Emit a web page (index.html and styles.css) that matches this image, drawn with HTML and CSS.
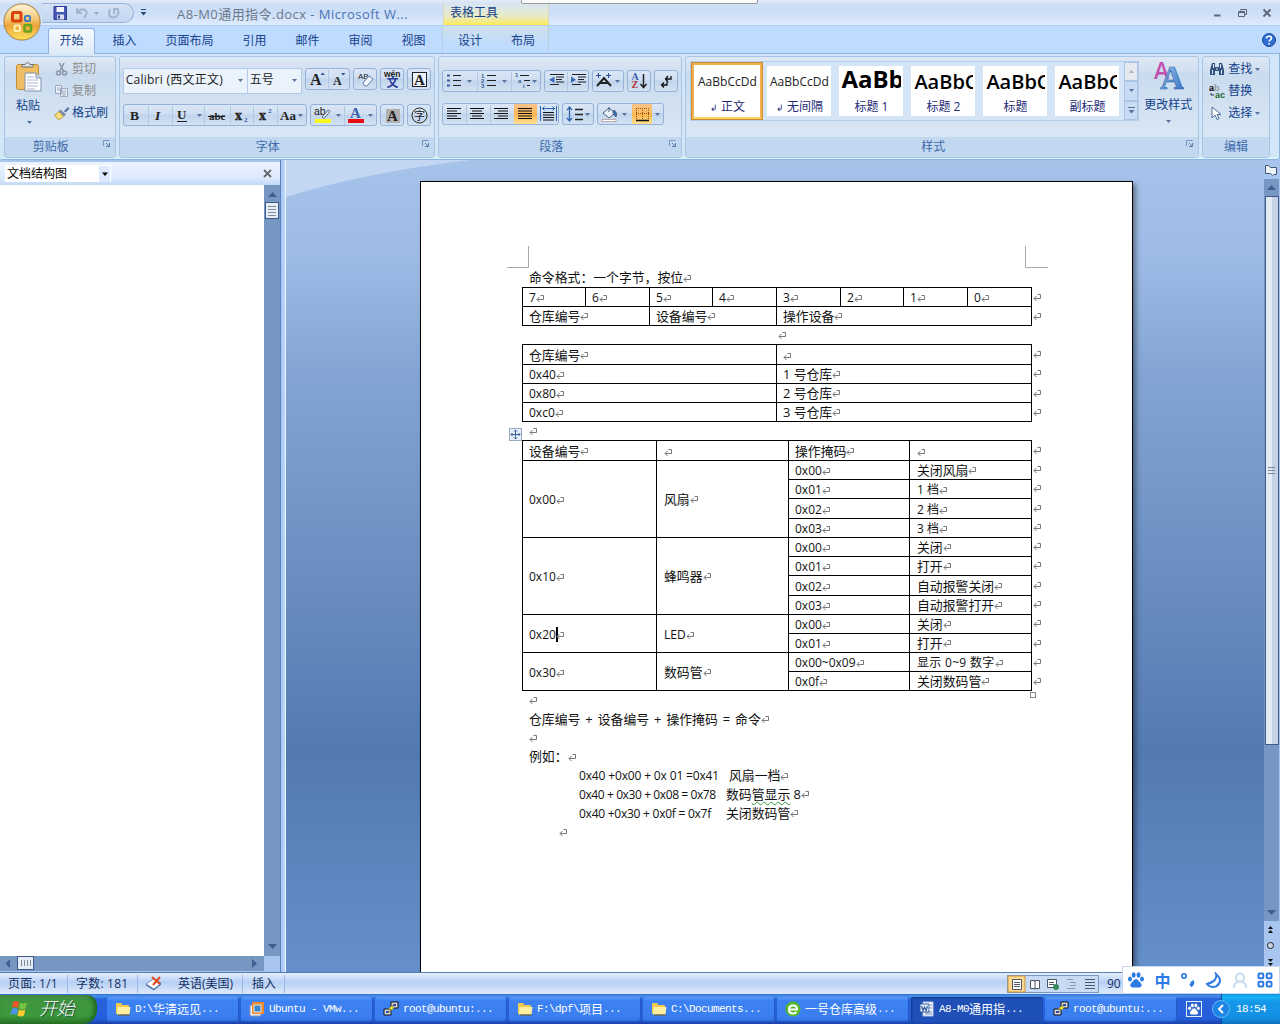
FILE: index.html
```html
<!DOCTYPE html>
<html lang="zh-CN">
<head>
<meta charset="utf-8">
<title>A8-M0通用指令.docx - Microsoft Word</title>
<link rel="stylesheet" href="styles.css">
</head>
<body>
<svg class="defs" width="0" height="0">
  <defs>
    <linearGradient id="gold" x1="0" y1="0" x2="0" y2="1"><stop offset="0" stop-color="#fff6dc"/><stop offset=".4" stop-color="#f5cb7a"/><stop offset=".6" stop-color="#eda33a"/><stop offset="1" stop-color="#ffe45c"/></linearGradient>
    <linearGradient id="sel" x1="0" y1="0" x2="0" y2="1"><stop offset="0" stop-color="#f9c48a"/><stop offset=".5" stop-color="#fdb650"/><stop offset="1" stop-color="#ffeb9f"/></linearGradient>
    <linearGradient id="blueA" x1="0" y1="0" x2="1" y2="1"><stop offset="0" stop-color="#a8cdf2"/><stop offset="1" stop-color="#2c6cc0"/></linearGradient>
    <symbol id="dd" viewBox="0 0 5 3"><path d="M0 0h5L2.5 3z" fill="#56749d"/></symbol>
    <symbol id="folder" viewBox="0 0 16 16"><path d="M1 3q0-1 1-1h4l1.500 2H13q1 0 1 1v8H2q-1 0-1-1z" fill="#f2cb4e"/><path d="M2.500 6H15.500l-1 7.500H2z" fill="#fff0a0"/><path d="M3 14h11.500" stroke="#7d5a10"/></symbol>
    <symbol id="putty" viewBox="0 0 16 16"><path d="M8 1h7v6H8zM1 8h7v6H1z" fill="#d8d8d8" stroke="#111"/><path d="M10 3h3v2h-3zM3 10h3v2H3z" fill="#2844b8"/><path d="M11 3L5 8h3l-3 4 7-6H9z" fill="#ffee22" stroke="#554" stroke-width=".4"/></symbol>
    <symbol id="paw" viewBox="0 0 18 18"><ellipse cx="3" cy="8" rx="2" ry="2.500"/><ellipse cx="6.700" cy="4" rx="2" ry="2.700"/><ellipse cx="11.500" cy="4" rx="2" ry="2.700"/><ellipse cx="15" cy="8" rx="2" ry="2.500"/><path d="M9 8c2 0 3 2.500 4.700 4 2 2 .6 4.600-1.700 4.500H6c-2.500 0-3.700-2.500-1.700-4.500C6 10.500 7 8 9 8z"/></symbol>
    <symbol id="launch" viewBox="0 0 9 9"><path d="M1.500 7V1.500h6" stroke="#7593bd" fill="none"/><path d="M4 4l3 3M7.500 4v3.500H4" stroke="#5c7dac" fill="none"/></symbol>
  </defs>
</svg>

<header class="titlebar">
  <div class="qat">
    <svg width="92" height="19" viewBox="42 4 92 19">
      <path d="M54 6.500h12.500v13H54z" fill="#4757b4" stroke="#2b3990"/><path d="M56.500 7h7.500v5h-7.500z" fill="#f3f5fc"/><path d="M57 14.500h7v5h-7z" fill="#d7dcf0"/><path d="M58 15.500h2v3h-2z" fill="#2b3990"/>
      <path d="M77 8v5h5M77 12.500q4-5 9-2 2 3-2 7" stroke="#a3b4d0" stroke-width="2" fill="none"/>
      <use href="#dd" x="94" y="12" width="5" height="3" opacity=".5"/>
      <path d="M110 9q-3 8 3 8.500 7-1 5-8M118.500 9h-4.500v5" stroke="#a3b4d0" stroke-width="2" fill="none"/>
    </svg>
  </div>
  <svg class="qat-more" width="7" height="8"><path d="M1 .5h5" stroke="#2b4a7c"/><path d="M.5 3h6L3.500 6.500z" fill="#2b4a7c"/></svg>
  <h1 class="caption"><span>A8-M0通用指令.docx</span> - Microsoft W...</h1>
  <div class="context-head">表格工具</div>
  <div class="window-controls">
    <svg width="62" height="14" viewBox="1211 6 62 14" fill="none" stroke="#5b6675"><path d="M1214 15.500h6.500" stroke-width="2"/><path d="M1240.500 10.500v-1h6v5h-2M1238.500 11.500h6v5h-6zM1238.500 12.500h6"/><path d="M1263.500 9.500l7 7M1270.500 9.500l-7 7" stroke-width="1.800"/></svg>
  </div>
  <div class="peek"></div>
</header>

<nav class="tabs">
  <a class="tab active">开始</a><a class="tab">插入</a><a class="tab">页面布局</a><a class="tab">引用</a><a class="tab">邮件</a><a class="tab">审阅</a><a class="tab">视图</a>
  <div class="context-tabs"><a class="tab">设计</a><a class="tab">布局</a></div>
  <svg class="help" width="14" height="14"><circle cx="7" cy="7" r="6.500" fill="#2f6fd4" stroke="#1d4796"/><path d="M4.500 5.500q0-2.200 2.500-2.200t2.500 2q0 1.200-1.400 1.800-1 .5-1 1.500M7 10v1.600" stroke="#fff" stroke-width="1.600" fill="none"/></svg>
</nav>
<svg class="orb" width="42" height="42"><circle cx="22" cy="22" r="19" fill="#9aa9bf" opacity=".5"/><circle cx="22" cy="22" r="18" fill="url(#gold)" stroke="#b98a3a"/><rect x="12.500" y="12.500" width="8.500" height="8.500" rx="1" fill="none" stroke="#d8430e" stroke-width="3"/><rect x="25" y="16" width="5" height="5" rx="1" fill="none" stroke="#3f7fc2" stroke-width="2"/><rect x="14.500" y="25.500" width="5.500" height="5.500" rx="1" fill="none" stroke="#fff0b0" stroke-width="2"/><rect x="24.500" y="25" width="6.500" height="6.500" rx="1" fill="none" stroke="#68a51c" stroke-width="2.500"/></svg>

<section class="ribbon">
  <div class="group clipboard">
    <div class="group-body">
      <div class="paste">
        <svg width="28" height="31"><rect x="1.500" y="3.500" width="22" height="25" rx="2" fill="#f0be62" stroke="#c08c35"/><path d="M7 6V3.500h3q2.500-4 5 0h3V6z" fill="#dfe3ea" stroke="#6c6c6c"/><path d="M10 12h11l5 5v13H10z" fill="#fff" stroke="#8190aa"/><path d="M12 16h7M12 19h11M12 22h11M12 25h11M12 28h8" stroke="#a9b8d0"/><path d="M21 12v5h5" fill="#cfdaea" stroke="#8190aa"/></svg>
        <span>粘贴</span><svg width="5" height="3"><use href="#dd"/></svg>
      </div>
      <div class="clip-list">
        <span class="off"><svg width="16" height="14"><path d="M5.500 1l4 8M10 1L6 9" stroke="#8a95a8" stroke-width="1.600"/><circle cx="4.500" cy="11" r="2" fill="none" stroke="#8a95a8" stroke-width="1.500"/><circle cx="10.500" cy="11" r="2" fill="none" stroke="#8a95a8" stroke-width="1.500"/></svg>剪切</span>
        <span class="off"><svg width="16" height="14"><path d="M1.500 1.500h6v8h-6zM6.500 4.500h7v8h-7z" fill="#edf1f7" stroke="#9aa8bf"/><path d="M8 7h4M8 9h4M8 11h4M3 4h3M3 6h3" stroke="#9aa8bf"/></svg>复制</span>
        <span><svg width="16" height="14"><path d="M10 5l4-4 1.500 1.500-4 4z" fill="#52709c"/><path d="M6.500 3.500l5.500 5-2 2-5.500-5.500z" fill="#7c8ca8"/><path d="M4.500 5.500l5 5Q7 13 4 13.500L.5 9q3-1 4-3.500z" fill="#fbdf7a" stroke="#b08a2c" stroke-width=".8"/></svg>格式刷</span>
      </div>
    </div>
    <div class="group-name">剪贴板<svg width="9" height="9"><use href="#launch"/></svg></div>
  </div>

  <div class="group font">
    <div class="group-body">
      <div class="row first">
        <div class="combo face">Calibri (西文正文)<svg width="5" height="3"><use href="#dd"/></svg></div>
        <div class="combo size">五号<svg width="5" height="3"><use href="#dd"/></svg></div>
        <svg class="btns gap" width="44" height="22"><g class="glyph"><text x="4" y="16" font-size="16">A</text><text x="27" y="16" font-size="12">A</text></g><path d="M14.500 6h4.500L16.700 3.500zM35 4h4.500L37.200 6.500z" fill="#33569a"/><path class="sep" d="M22.500 1v20"/></svg>
        <svg class="btns" width="24" height="22"><text x="4" y="10" font-size="8" font-family="Liberation Sans">AB</text><path d="M9 14l6-7 4 3-6 7q-3 1-4-3z" fill="#f4f7ff" stroke="#5e7bad"/></svg>
        <svg class="btns" width="24" height="22"><text x="3" y="8" font-size="8.500" font-weight="bold" font-family="Liberation Sans">wén</text><text x="5.500" y="18" font-size="12" font-weight="bold" fill="#2c3c9c" class="cjk">文</text></svg>
        <svg class="btns" width="24" height="22"><rect x="4.500" y="3.500" width="14" height="14" fill="#eaf1fa" stroke="#222"/><text class="glyph" x="6" y="16" font-size="15">A</text></svg>
      </div>
      <div class="row second">
        <svg class="btns" width="184" height="22"><g class="glyph"><text x="6" y="15" font-size="13.500">B</text><text x="31" y="15" font-size="13.500" font-style="italic">I</text><text x="53" y="14" font-size="13">U</text><path d="M53 16.500h10" stroke="#222"/><text x="85" y="15" font-size="11">abc</text><path d="M84 11.500h17" stroke="#222"/><text x="111" y="15" font-size="14" stroke="#222" stroke-width=".4">x</text><text x="120" y="17" font-size="7" fill="#33569a">2</text><text x="135" y="15" font-size="14" stroke="#222" stroke-width=".4">x</text><text x="144" y="8" font-size="7" fill="#33569a">2</text><text x="156" y="15" font-size="13">Aa</text></g><use href="#dd" x="73" y="9" width="5" height="3"/><use href="#dd" x="174" y="9" width="5" height="3"/><path class="sep" d="M24.500 1v20M48.500 1v20M80.500 1v20M106.500 1v20M129.500 1v20M153.500 1v20"/></svg>
        <svg class="btns" width="67" height="22"><text x="3" y="10" font-size="10.500" font-family="Liberation Sans">ab</text><path d="M11 12l6-7 2 1.500-6 7z" fill="#dae6f6" stroke="#567"/><path d="M4 14h16v4H4z" fill="#f8f81c"/><use href="#dd" x="25" y="9" width="5" height="3"/><text class="glyph blue" x="39" y="13" font-size="15">A</text><path d="M37 14h16v4H37z" fill="#e80c14"/><use href="#dd" x="57" y="9" width="5" height="3"/><path class="sep" d="M33.500 1v20"/></svg>
        <svg class="btns" width="24" height="22"><path d="M5 4h14v14H5z" fill="#b0b0b0"/><text class="glyph" x="6" y="16" font-size="15">A</text></svg>
        <svg class="btns" width="24" height="22"><circle cx="11.500" cy="10.500" r="7.500" fill="none" stroke="#222"/><text class="cjk" x="6" y="14.500" font-size="11">字</text></svg>
      </div>
    </div>
    <div class="group-name">字体<svg width="9" height="9"><use href="#launch"/></svg></div>
  </div>

  <div class="group para">
    <div class="group-body">
      <div class="row first">
        <svg class="btns" width="99" height="22"><g stroke="#222" stroke-width="1"><path d="M10 4.500h8M10 9.500h8M10 14.500h8M44 4.500h9M44 9.500h9M44 14.500h9M77 4.500h9M81 9.500h6M84 14.500h3"/></g><path d="M4 3.500h3v2H4zM4 8.500h3v2H4zM4 13.500h3v2H4z" fill="#3d5f9c"/><g font-size="6" font-family="Liberation Sans" font-weight="bold" fill="#3d5f9c"><text x="38" y="7">1</text><text x="38" y="12">2</text><text x="38" y="17">3</text><text x="72" y="6">1</text><text x="75" y="12">a</text><text x="80" y="17">i</text></g><use href="#dd" x="24" y="9" width="5" height="3"/><use href="#dd" x="59" y="9" width="5" height="3"/><use href="#dd" x="89" y="9" width="5" height="3"/><path class="sep" d="M34.500 1v20M68.500 1v20"/></svg>
        <svg class="btns" width="45" height="22"><path d="M5 3.500h14M11 6h8M11 8.500h6M11 11h8M5 13.500h9M27 3.500h14M33 6h8M33 8.500h6M33 11h8M27 13.500h9" stroke="#222" stroke-width="1.200"/><path d="M9.500 5.500v6.500L4 8.700zM26 5.500v6.500l5-3.300z" fill="#3f6db8"/><path class="sep" d="M22.500 1v20"/></svg>
        <svg class="btns" width="32" height="22"><path d="M4 15l7-8 7 8M7 12h8" fill="none" stroke="#222" stroke-width="2"/><path d="M3 4.500h5M5.500 2v5M13 4.500h5M15.500 2v5" stroke="#2d4898"/><use href="#dd" x="22" y="9" width="5" height="3"/></svg>
        <svg class="btns" width="24" height="22"><g font-family="Liberation Serif" font-weight="bold" font-size="10"><text x="3.500" y="9" fill="#3b5fa8">A</text><text x="3.500" y="17" fill="#ad3232">Z</text></g><path d="M15.500 3v13M12.500 13l3 3.500 3-3.500" fill="none" stroke="#222" stroke-width="1.500"/></svg>
        <svg class="btns" width="24" height="22"><path d="M16 5v3h-5M13 5l-2.500 3L13 11M12 11v3H7M9 11.500L6.500 14 9 16.500" fill="none" stroke="#111" stroke-width="1.300"/></svg>
      </div>
      <div class="row second">
        <svg class="btns" width="117" height="22"><path d="M71 0h23v22H71z" fill="url(#sel)"/><g stroke="#111" stroke-width="1.200"><path d="M4 4.500h14M4 7h10M4 9.500h14M4 12h10M4 14.500h14M27 4.500h14M29 7h10M27 9.500h14M29 12h10M27 14.500h14M51 4.500h14M55 7h10M51 9.500h14M55 12h10M51 14.500h14M75 4.500h14M75 7h14M75 9.500h14M75 12h14M75 14.500h14M100 8.500h11M100 11h11M100 13.500h11M100 16h11"/></g><path d="M97.500 2v15M113.500 2v15M99 4.500h13M101.500 2.500l-2 2 2 2M109.500 2.500l2 2-2 2" stroke="#2f63ad" fill="none"/><path class="sep" d="M23.500 1v20M47.500 1v20"/></svg>
        <svg class="btns" width="32" height="22"><path d="M6.500 3v14M4 6l2.500-3L9 6M4 14l2.500 3L9 14" stroke="#2f63ad" stroke-width="1.300" fill="none"/><path d="M12 5.500h8M12 10.500h8M12 15.500h8" stroke="#222" stroke-width="1.300"/><use href="#dd" x="22" y="9" width="5" height="3"/></svg>
        <svg class="btns" width="67" height="22"><path d="M34 0h20v22H34z" fill="url(#sel)"/><path d="M5 9l6-5 6 5-6 5z" fill="#eef3fa" stroke="#445d85"/><path d="M11 8V3M16 6q4 3 2 7l-3-4z" fill="#3b6fb4" stroke="#445d85"/><path d="M4 15.500h14v2H4z" fill="#fff" stroke="#a88" stroke-width=".7"/><path d="M38 4.500h13M38 9.500h13M38.500 4v11M44.500 4v11M50.500 4v11" stroke="#8b5713" stroke-dasharray="1 1"/><path d="M38 16.500h13" stroke="#111" stroke-width="1.500"/><use href="#dd" x="24" y="9" width="5" height="3"/><use href="#dd" x="57" y="9" width="5" height="3"/></svg>
      </div>
    </div>
    <div class="group-name">段落<svg width="9" height="9"><use href="#launch"/></svg></div>
  </div>

  <div class="group styles">
    <div class="group-body">
      <div class="gallery">
        <div class="tile picked"><b>AaBbCcDd</b><span><i>↲</i> 正文</span></div>
        <div class="tile"><b>AaBbCcDd</b><span><i>↲</i> 无间隔</span></div>
        <div class="tile big"><b>AaBb</b><span>标题 1</span></div>
        <div class="tile mid"><b>AaBbC</b><span>标题 2</span></div>
        <div class="tile mid"><b>AaBbC</b><span>标题</span></div>
        <div class="tile mid"><b>AaBbC</b><span>副标题</span></div>
        <div class="gallery-scroll"><i class="dim"><svg width="5" height="3"><path d="M0 3h5L2.500 0z" fill="#a9b2bf"/></svg></i><i><svg width="5" height="3"><use href="#dd"/></svg></i><i><svg width="7" height="7"><path d="M0 .5h7" stroke="#56749d"/><path d="M.5 3h6l-3 3.500z" fill="#56749d"/></svg></i></div>
      </div>
      <div class="change">
        <svg width="30" height="28"><g font-family="Open Sans" font-weight="600"><text x="0" y="17" font-size="23" textLength="15" lengthAdjust="spacingAndGlyphs" fill="#c04fae">A</text></g><text x="6" y="27" font-family="Liberation Serif" font-weight="bold" font-size="34" textLength="24" lengthAdjust="spacingAndGlyphs" fill="url(#blueA)" stroke="#2d64ac" stroke-width=".6">A</text></svg>
        <span>更改样式</span><svg width="5" height="3"><use href="#dd"/></svg>
      </div>
    </div>
    <div class="group-name">样式<svg width="9" height="9"><use href="#launch"/></svg></div>
  </div>

  <div class="group edit">
    <div class="group-body">
      <span><svg width="16" height="14"><path d="M3 1h3v4h4V1h3l2 7v5h-5V9H6v4H1V8z" fill="#33527f"/><path d="M3.500 8v4M12.500 8v4M4.500 2v4M11.500 2v4M7 7h2" stroke="#dce9f8"/></svg>查找<svg width="5" height="3"><use href="#dd"/></svg></span>
      <span><svg width="16" height="15"><g font-family="Liberation Sans" font-weight="bold" font-size="9"><text x="0" y="7">a<tspan fill="#999">b</tspan></text><text x="6" y="14" fill="#276a2b">ac</text></g><path d="M2 9v2h3" stroke="#234" fill="none"/></svg>替换</span>
      <span><svg width="16" height="14"><path d="M3 1v11l3-3 2 4.500 2-1-2-4h4z" fill="#fff" stroke="#4d6c98"/></svg>选择<svg width="5" height="3"><use href="#dd"/></svg></span>
    </div>
    <div class="group-name">编辑</div>
  </div>
</section>

<main class="workspace">
  <aside class="map">
    <div class="map-head"><div class="map-pick">文档结构图<svg width="11" height="16"><path d="M3 6.500h6L6 10z" fill="#000"/></svg></div><svg width="9" height="9"><path d="M1 1l7 7M8 1L1 8" stroke="#66696e" stroke-width="1.800"/></svg></div>
    <div class="map-body"><div class="map-blank"></div>
      <svg class="vbar" width="16" height="771"><path d="M4 12h9L8.500 7z" fill="#3f5f93"/><rect x="1.500" y="17.500" width="13" height="16" fill="#e5edf7" stroke="#41598a"/><path d="M4 21.500h8M4 24.500h8M4 27.500h8M4 30.500h8" stroke="#7c8797"/><path d="M4 759h9l-4.500 5z" fill="#3f5f93"/></svg>
    </div>
    <svg class="hbar" width="264" height="15"><path d="M10 3v9L5.500 7.500z" fill="#3f5f93"/><rect x="17.500" y=".5" width="16" height="13" fill="#e5edf7" stroke="#41598a"/><path d="M21.500 4v6M24.500 4v6M27.500 4v6M30.500 4v6" stroke="#7c8797"/><path d="M252 3v9l5-4.500z" fill="#3f5f93"/></svg>
  </aside>
  <div class="splitter"></div>
  <div class="desk">
    <svg class="swoosh" width="200" height="40"><path d="M0 0h185Q80 12 0 37z" fill="#c3d7f2"/></svg>
    <article class="page">
      <svg class="crop" width="542" height="22"><path d="M21.500 0v21.500H0M518.500 0v21.500H541" fill="none" stroke="#aaa"/></svg>
      <p>命令格式：一个字节，按位<i class="pm"></i></p>
      <div class="table-wrap"><div class="grid t1">
        <div>7<i class="pm"></i></div><div>6<i class="pm"></i></div><div>5<i class="pm"></i></div><div>4<i class="pm"></i></div><div>3<i class="pm"></i></div><div>2<i class="pm"></i></div><div>1<i class="pm"></i></div><div>0<i class="pm"></i></div>
        <div class="h c2">仓库编号<i class="pm"></i></div><div class="h c2">设备编号<i class="pm"></i></div><div class="h c4">操作设备<i class="pm"></i></div>
      </div><div class="ends"><i class="pm"></i><i class="pm"></i></div></div>
      <p class="center"><i class="pm"></i></p>
      <div class="table-wrap"><div class="grid t2">
        <div class="h">仓库编号<i class="pm"></i></div><div><i class="pm"></i></div>
        <div>0x40<i class="pm"></i></div><div class="h">1 号仓库<i class="pm"></i></div>
        <div>0x80<i class="pm"></i></div><div class="h">2 号仓库<i class="pm"></i></div>
        <div>0xc0<i class="pm"></i></div><div class="h">3 号仓库<i class="pm"></i></div>
      </div><div class="ends"><i class="pm"></i><i class="pm"></i><i class="pm"></i><i class="pm"></i></div></div>
      <p class="short"><i class="pm"></i></p>
      <div class="table-wrap"><svg class="mover" width="13" height="13"><rect x=".5" y=".5" width="12" height="12" fill="#e6eefa" stroke="#9aa9c2"/><path d="M6.500 2v9M2 6.500h9M5 3.500L6.500 2 8 3.500M5 9.500L6.500 11 8 9.500M3.500 5L2 6.500 3.500 8M9.500 5L11 6.500 9.500 8" stroke="#3c5c9c" fill="none"/></svg>
      <div class="grid t3">
        <div class="h">设备编号<i class="pm"></i></div><div class="in"><i class="pm"></i></div><div class="h">操作掩码<i class="pm"></i></div><div class="in"><i class="pm"></i></div>
        <div class="r4">0x00<i class="pm"></i></div><div class="h in r4">风扇<i class="pm"></i></div><div>0x00<i class="pm"></i></div><div class="h in">关闭风扇<i class="pm"></i></div>
        <div>0x01<i class="pm"></i></div><div class="in">1 档<i class="pm"></i></div>
        <div>0x02<i class="pm"></i></div><div class="in">2 档<i class="pm"></i></div>
        <div>0x03<i class="pm"></i></div><div class="in">3 档<i class="pm"></i></div>
        <div class="r4">0x10<i class="pm"></i></div><div class="h in r4">蜂鸣器<i class="pm"></i></div><div>0x00<i class="pm"></i></div><div class="h in">关闭<i class="pm"></i></div>
        <div>0x01<i class="pm"></i></div><div class="h in">打开<i class="pm"></i></div>
        <div>0x02<i class="pm"></i></div><div class="h in">自动报警关闭<i class="pm"></i></div>
        <div>0x03<i class="pm"></i></div><div class="h in">自动报警打开<i class="pm"></i></div>
        <div class="r2">0x20<i class="caret"></i><i class="pm"></i></div><div class="in r2">LED<i class="pm"></i></div><div>0x00<i class="pm"></i></div><div class="h in">关闭<i class="pm"></i></div>
        <div>0x01<i class="pm"></i></div><div class="h in">打开<i class="pm"></i></div>
        <div class="r2">0x30<i class="pm"></i></div><div class="h in r2">数码管<i class="pm"></i></div><div>0x00~0x09<i class="pm"></i></div><div class="in wide">显示 0~9 数字<i class="pm"></i></div>
        <div>0x0f<i class="pm"></i></div><div class="h in">关闭数码管<i class="pm"></i></div>
      </div><div class="ends"><i class="pm"></i><i class="pm"></i><i class="pm"></i><i class="pm"></i><i class="pm"></i><i class="pm"></i><i class="pm"></i><i class="pm"></i><i class="pm"></i><i class="pm"></i><i class="pm"></i><i class="pm"></i><i class="pm"></i></div><i class="resize"></i></div>
      <p><i class="pm"></i></p>
      <p class="formula">仓库编号 + 设备编号 + 操作掩码 = 命令<i class="pm"></i></p>
      <p><i class="pm"></i></p>
      <p>例如：<i class="pm"></i></p>
      <p class="example"><span class="sum1">0x40 +0x00 + 0x 01 =0x41</span><span>风扇一档</span><i class="pm"></i></p>
      <p class="example"><span class="sum2">0x40 + 0x30 + 0x08 = 0x78</span><span>数码<u>管显示</u> 8</span><i class="pm"></i></p>
      <p class="example"><span class="sum3">0x40 +0x30 + 0x0f = 0x7f</span><span>关闭数码管</span><i class="pm"></i></p>
      <p class="last"><i class="pm"></i></p>
    </article>
  </div>
  <svg class="docbar" width="16" height="812" viewBox="1264 160 16 812"><rect x="1264" y="160" width="16" height="812" fill="#a7c5ee"/><path d="M1265.500 165.500h3l2 2h6v7h-3l-1 1-2-2h-5z" fill="#eef4fc" stroke="#46566f"/><rect x="1264" y="179" width="15" height="742" fill="#7797c3"/><path d="M1267 190h9l-4.500-5z" fill="#3f5f93"/><rect x="1265.500" y="196.500" width="13" height="548" fill="#c6d3e6" stroke="#41598a"/><path d="M1266 197h6v547h-6z" fill="#e3ebf5"/><path d="M1268 467.500h7M1268 470.500h7M1268 473.500h7" stroke="#7c8797"/><path d="M1267 910h9l-4.500 5z" fill="#3f5f93"/><path d="M1268 929h5l-2.500-3zM1268 933h5l-2.500-3zM1268 959h5l-2.500 3zM1268 963h5l-2.500 3z" fill="#111"/><circle cx="1270.500" cy="945.500" r="3" fill="#ccd6e3" stroke="#222"/></svg>
</main>

<footer class="status">
  <span class="s1">页面: 1/1</span><span class="s2">字数: 181</span><span class="s3"><svg width="18" height="15"><path d="M1 8l7-5 8 4-7 6z" fill="#fff" stroke="#6a87b8"/><path d="M1 9l8 5 7-6" fill="none" stroke="#44639b"/><path d="M7 1l8 7M15 1L8 9" stroke="#e4481e" stroke-width="2"/></svg>英语(美国)</span><span class="s4">插入</span>
  <svg class="views" width="92" height="18"><rect x=".5" y=".5" width="91" height="17" fill="#c8dbf5" stroke="#7996c4"/><path d="M1 1h17v16H1z" fill="#ffd88c" stroke="#c49446"/><g fill="#fff" stroke="#4f5662"><path d="M5.500 4.500h9v10h-9zM23.500 5.500h4l.500 1 .5-1h4v8h-4l-.5 1-.5-1h-4zM28 6v8M40.500 4.500h9v8h-9z"/><path d="M7 7.500h6M7 9.500h6M7 11.500h6M42 7.500h5M42 9.500h5M78 4.500h10M78 7.500h10M78 10.500h10M78 13.500h10"/><path d="M60 4.500h6M63 7.500h6M63 10.500h6M60 13.500h8" stroke="#8d97a8"/></g><circle cx="49" cy="12" r="3" fill="#398c60"/></svg>
  <span class="zoomed">90</span>
</footer>

<div class="ime">
  <svg width="18" height="18" fill="#2c7be5"><use href="#paw"/></svg>
  <b>中</b>
  <svg width="16" height="18" fill="none" stroke="#2c7be5" stroke-width="2"><circle cx="4" cy="5" r="2.200" stroke-width="1.700"/><path d="M12 10q1.500 2.500-1.500 5" stroke-width="3.500"/></svg>
  <svg width="17" height="17" fill="none" stroke="#2c7be5" stroke-width="2"><path d="M11 2q2 7-9 10 3 4 9 2.500Q19 9 11 2z"/></svg>
  <svg width="16" height="17" fill="none" stroke="#c9daf0" stroke-width="2"><circle cx="8" cy="5.500" r="4"/><path d="M2 16q0-6.500 6-6.500t6 6.500"/></svg>
  <svg width="16" height="16" fill="none" stroke="#2c7be5" stroke-width="2"><rect x="1.500" y="1.500" width="4.800" height="4.800" rx="1"/><rect x="9.700" y="1.500" width="4.800" height="4.800" rx="1"/><rect x="1.500" y="9.700" width="4.800" height="4.800" rx="1"/><rect x="9.700" y="9.700" width="4.800" height="4.800" rx="1"/></svg>
</div>

<div class="taskbar">
  <div class="start"><svg width="20" height="18"><path d="M3 2q3-2 6 0L8 8Q5 6 2 8z" fill="#f0592b"/><path d="M10 2.500q3 2 7 0l-1.500 6q-3 2-6.500 0z" fill="#7cc242"/><path d="M1.800 9q3-2 6 0l-1 6q-3-2-6.300 0z" fill="#4a94ea"/><path d="M8.800 9.500q3 2 6.500 0l-1.300 6q-3 2-6.500 0z" fill="#fcc92f"/></svg><em>开始</em></div>
  <div class="tasks">
    <div><svg width="16" height="16"><use href="#folder"/></svg>D:\<b>华清远见</b>...</div>
    <div><svg width="16" height="16"><rect x="1" y="4" width="11" height="11" rx="1" fill="#e9ecf2" stroke="#8895a8"/><rect x="3" y="1" width="12" height="12" rx="1" fill="#f18a24"/><rect x="5" y="4" width="7" height="7" fill="#3f87cb" stroke="#dce8f4"/></svg>Ubuntu - VMw...</div>
    <div><svg width="16" height="16"><use href="#putty"/></svg>root@ubuntu:...</div>
    <div><svg width="16" height="16"><use href="#folder"/></svg>F:\dpf\<b>项目</b>...</div>
    <div><svg width="16" height="16"><use href="#folder"/></svg>C:\Documents...</div>
    <div><svg width="16" height="16"><circle cx="8" cy="8" r="7.500" fill="#54b82c"/><path d="M4 8.500h8q0-4-4-4t-4 4 4 4q2.500 0 3.500-1.500" stroke="#fff" stroke-width="2" fill="none"/></svg><b>一号仓库高级</b>...</div>
    <div class="current"><svg width="16" height="16"><path d="M4 1h10v14H4z" fill="#fff" stroke="#b4c4e4"/><path d="M6 11h7M6 13h7M11 4h2M11 7h2" stroke="#6286c2"/><path d="M1 3h9v8H1z" fill="#e8effc" stroke="#315a9e"/><path d="M2.500 5l1.500 4.500L5.500 6 7 9.500 8.500 5" stroke="#315a9e" stroke-width="1.200" fill="none"/></svg>A8-M0<b>通用指</b>...</div>
    <div><svg width="16" height="16"><use href="#putty"/></svg>root@ubuntu:...</div>
  </div>
  <svg class="lang" width="16" height="16"><rect x=".5" y=".5" width="15" height="15" fill="#2a64cc" stroke="#e4ecfa"/><use href="#paw" x="1.500" y="1.500" width="13" height="13" fill="#fff"/></svg>
  <div class="tray"><svg width="18" height="18"><circle cx="9" cy="9" r="8.500" fill="#1c84e4" stroke="#66b8f6"/><path d="M11 5L7 9l4 4" stroke="#fff" stroke-width="2" fill="none"/></svg><time>18:54</time></div>
</div>
</body>
</html>
```
FILE: styles.css
```css
* { box-sizing: border-box; }
body {
  margin: 0; width: 1280px; height: 1024px; overflow: hidden; position: relative;
  display: flex; flex-direction: column;
  font: 12px/16px "Open Sans", "Noto Sans CJK SC", sans-serif; color: #15428b; background: #bfdbff;
}
svg { display: block; flex: none; }
i { font-style: normal; }
.defs { position: absolute; }
.cjk { font-family: "Noto Sans CJK SC", sans-serif; }

.titlebar { height: 26px; flex: none; display: flex; position: relative; padding-left: 42px; background: linear-gradient(#e3ebf8 0, #cfe0f6 4px, #cbdef8 12px, #dceafd 24px); border-bottom: 1px solid #b0cdf5; }
.qat { width: 92px; height: 20px; margin-top: 3px; border: 1px solid #9ab4dc; border-left: 0; border-radius: 0 10px 10px 0; background: linear-gradient(#d4e2f5, #c3d6f0); }
.qat-more { margin: 9px 0 0 6px; }
.caption { margin: 6px 0 0 30px; width: 266px; font: 13px/16px "Open Sans", "Noto Sans CJK SC", sans-serif; color: #4a72b4; white-space: nowrap; letter-spacing: .45px; }
.caption span { color: #6c7888; }
.context-head { width: 106px; margin-top: 3px; padding: 2px 6px; border: solid #d4d9b8; border-width: 0 1px; background: linear-gradient(#d7e5f5, #e8ebc5 60%, #f7ea76 90%, #ffe83c); }
.window-controls { margin: 6px 7px 0 auto; }
.peek { position: absolute; left: 521px; top: -3px; width: 237px; height: 7px; background: #fafafa; border: 1px solid #999; border-radius: 2px; }

.tabs { height: 28px; flex: none; display: flex; align-items: flex-end; padding-left: 48px; background: #bfdbff; border-bottom: 1px solid #8db2e3; }
.tab { height: 26px; padding: 6px 14.500px 0; white-space: nowrap; }
.tab.active { padding: 4px 0 0 10.500px; width: 47px; margin: 0 3px -1px 0; height: 26px; background: linear-gradient(#f4f9ff, #dfeaf8); border: 1px solid #8db2e3; border-bottom: 0; border-radius: 3px 3px 0 0; }
.context-tabs { display: flex; margin-left: 2px; height: 27px; align-items: flex-end; border: solid #b9cfdc; border-width: 0 1px; background: linear-gradient(#cfe0e8, #bfdbff 70%); width: 107px; }
.context-tabs .tab { padding: 6px 14px 0 15px; }
.help { margin: 0 4px 6px auto; }
.orb { position: absolute; left: 0; top: 0; }

.ribbon { height: 106px; flex: none; display: flex; gap: 3px; padding: 2px 9px 3px 4px; background: #d3e6f8; border: solid #8db2e3; border-width: 0 1px 1px 0; border-radius: 0 0 3px 3px; box-shadow: inset 0 -2px #d5f4fa; }
.group { display: flex; flex-direction: column; border: 1px solid #a9c5e3; border-radius: 3px; background: linear-gradient(#dee8f5 0, #d1dff0 14px, #c9dbee 16px, #d9e7f5 80px); height: 102px; }
.group-body { flex: 1; display: flex; min-height: 0; }
.group-name { height: 20px; flex: none; text-align: center; line-height: 20px; color: #3e6aaa; background: #c1d8f0; position: relative; padding-right: 18px; }
.group-name svg { position: absolute; right: 4px; top: 2px; }
.edit .group-name { padding-right: 0; }
.clipboard { width: 112px; }
.paste { width: 48px; display: flex; flex-direction: column; align-items: center; padding-top: 4px; }
.paste span { margin: 6px 2px 7px 0; }
.clip-list { padding-top: 1px; }
.clip-list span { display: flex; align-items: center; gap: 2px; height: 22px; white-space: nowrap; padding-left: 1px; }
.clip-list span.off { color: #8d8d8d; }
.font { width: 317px; }
.para { width: 245px; }
.styles { width: 515px; }
.edit { width: 68px; }
.font .group-body, .para .group-body { flex-direction: column; padding: 11px 3px 0; }
.para .group-body { padding-top: 13px; }
.row { display: flex; gap: 3px; flex: none; }
.font .first { height: 36px; }
.para .first { height: 33px; }
.combo { height: 26px; border: 1px solid #b3cbe8; background: #eaf2fb; color: #222; display: flex; align-items: center; justify-content: space-between; padding: 0 4px 2px 2px; white-space: nowrap; }
.face { width: 125px; margin-right: -4px; letter-spacing: .25px; }
.size { width: 55px; }
.btns { border: 1px solid #96b2d8; border-radius: 3px; background: linear-gradient(#d9e6f6 0, #cfdff2 45%, #c0d4ec 50%, #d3e2f3 100%); fill: #222; }
.font .first .gap { width: 45px; }
.btns .sep { stroke: #b3c8e3; fill: none; }
.glyph { font-family: "Liberation Serif", serif; font-weight: bold; }
.blue { fill: #3a62a8; }

.gallery { width: 449px; height: 60px; margin: 4px 0 0 4px; border: 1px solid #b4cdea; background: #d4e5f8; display: flex; }
.tile { width: 64px; height: 50px; margin: 4px 4px 0; padding: 0 2px; background: #fff; text-align: center; flex: none; overflow: hidden; color: #1e2a78; white-space: nowrap; }
.tile b { display: block; height: 32px; line-height: 31px; color: #222; font-weight: 400; font-size: 12px; overflow: hidden; }
.tile span { display: block; line-height: 17px; }
.tile i { font-size: 9px; }
.tile.picked { width: 72px; height: 58px; margin: 0; padding: 1px 2px 0; border: 3px solid #f1b04c; border-bottom-color: #ffd25c; outline: 1px solid #c98b33; outline-offset: -1px; }
.tile.big b { font-weight: 700; font-size: 24px; line-height: 26px; text-align: left; color: #000; }
.tile.mid b { font: 600 20px/31px "Open Sans", sans-serif; text-align: left; color: #000; padding-left: 1px; }
.gallery-scroll { margin-left: auto; width: 14px; display: grid; grid-template-rows: repeat(3, 1fr); }
.gallery-scroll i { display: grid; place-items: center; background: #c9dcf4; border: 1px solid #aac4e6; }
.gallery-scroll .dim { background: #e6e9ee; }
.change { flex: 1; display: flex; flex-direction: column; align-items: center; padding-top: 5px; }
.change span { margin: 7px 1px 7px 0; }
.edit .group-body { flex-direction: column; padding: 1px 0 0 6px; }
.edit .group-body span { height: 22px; display: flex; align-items: center; gap: 3px; }

.workspace { flex: 1; min-height: 0; display: flex; background: #a5c3eb; }
.map { width: 280px; display: flex; flex-direction: column; padding-top: 2px; background: #a7c5ee; }
.map-head { height: 23px; flex: none; display: flex; justify-content: space-between; align-items: center; padding: 0 8px 0 5px; background: linear-gradient(#ecf4ff, #dce9fb 70%, #c0d8f8); }
.map-pick { display: flex; align-items: center; justify-content: space-between; width: 106px; height: 17px; padding: 0 1px 0 2px; background: #fff; color: #000; }
.map-pick svg { background: #dce8fb; }
.map-body { display: flex; }
.map-blank { flex: 1; background: #fff; }
.vbar, .hbar { background: #7797c3; }
.splitter { width: 6px; border: solid #5b82bd; border-width: 0 0 0 1px; background: linear-gradient(90deg, #a8c8f4, #b7d4fb 70%, #eef6ff 72%); }
.desk { flex: 1; position: relative; padding: 21px 131px 0 134px; background: linear-gradient(#a6c3ea 0, #9dbbe5 12%, #84a5d3 26%, #5f84b9 62%, #527ab0 73%, #6690cc 100%); overflow: hidden; }
.swoosh { position: absolute; left: 0; top: 0; }
.page { position: relative; width: 713px; height: 800px; padding: 86px 0 0 101px; background: #fff; border: 1px solid #000; box-shadow: 3px 3px 5px #0006; color: #111; font: 12px/19px "Open Sans", "Noto Sans CJK SC", sans-serif; }
.crop { position: absolute; left: 86px; top: 64px; }
.page p { margin: 0; height: 18.800px; padding: 0 0 0 7px; display: flex; align-items: center; white-space: pre; font-size: 12.850px; }
.page p:first-of-type { height: 19px; }
.page p.center { justify-content: center; height: 18px; width: 512px; }
.page p.short { height: 18px; }
.page p.formula { font-size: 12.850px; word-spacing: 1.650px; }
.pm { display: inline-block; flex: none; width: 8px; height: 8px; background: url("data:image/svg+xml,%3Csvg xmlns='http://www.w3.org/2000/svg' width='8' height='8' fill='none' stroke='%23777'%3E%3Cpath d='M4.500 1.500h3v4H1M3.500 3L1 5.500 3.500 8'/%3E%3C/svg%3E"); }
.table-wrap { display: flex; position: relative; }
.grid { display: grid; width: 510px; border: solid #000; border-width: 1px 0 0 1px; flex: none; }
.grid > div { border: solid #000; border-width: 0 1px 1px 0; padding: 2px 0 0 6px; display: flex; align-items: center; white-space: pre; line-height: 16px; font-size: 12px; }
.grid > .h { font-size: 12.850px; padding-top: 0; }
.grid > .in { padding-left: 7px; }
.grid > .wide { letter-spacing: .3px; }
.t1 { grid-template: 19px 19px / 63px 64px 63px 64px 64px 63px 64px 64px; }
.t2 { grid-template: 20px 19px 19px 19px / 254px 255px; }
.t3 { grid-template: 20px 19px 19px 20px 19px 19px 19px 20px 19px 19px 19px 19px 19px / 134px 132px 121px 122px; }
.c2 { grid-column: span 2; }
.c4 { grid-column: span 4; }
.r4 { grid-row: span 4; }
.r2 { grid-row: span 2; }
.ends { padding-left: 1px; display: flex; flex-direction: column; justify-content: space-around; }
.mover { position: absolute; left: -13px; top: -12px; }
.resize { position: absolute; left: 508px; bottom: -7px; width: 6px; height: 6px; border: 1px solid #888; background: #fff; }
.caret { width: 2px; height: 15px; background: #000; margin-right: -2px; }
.page p.example { padding-left: 57px; font-size: 12px; }
.example span:nth-child(2) { font-size: 12.850px; }
.sum1 { width: 150px; letter-spacing: -.15px; }
.sum2 { width: 147px; letter-spacing: -.4px; }
.sum3 { width: 147px; letter-spacing: -.25px; }
.example u { text-decoration: underline wavy #2a9a3a 1px; text-underline-offset: 2px; }
.page p.last { padding-left: 37px; }

.status { height: 22px; flex: none; display: flex; align-items: center; color: #15305f; border-top: 1px solid #567db1; background: linear-gradient(#e4effd 0, #c5dafa 30%, #b7d0f4 45%, #d9e7fa 90%); }
.status > span { height: 18px; line-height: 19px; border-right: 1px solid #9bb9e4; display: flex; align-items: center; white-space: nowrap; }
.s1 { width: 68px; padding-left: 8px; letter-spacing: .2px; }
.s2 { width: 70px; padding-left: 8px; letter-spacing: .2px; }
.s3 { width: 105px; padding-left: 7px; gap: 15px; }
.s4 { width: 42px; padding-left: 9px; }
.views { margin-left: auto; }
.status .zoomed { width: 181px; padding-left: 8px; border: 0; }
.ime { position: absolute; left: 1122px; top: 966px; width: 158px; height: 28px; background: #fff; border: 1px solid #cbd8ec; display: flex; align-items: center; justify-content: space-between; padding: 0 6px 0 4px; }
.ime b { font: 700 16px/20px "Noto Sans CJK SC", sans-serif; color: #2c7be5; }

.taskbar { height: 30px; flex: none; display: flex; align-items: center; background: linear-gradient(#3168d5 0, #4993e6 2px, #2763dc 5px, #245edb 25px, #1941a5 30px); color: #fff; font: 11px/16px "Liberation Mono", monospace; letter-spacing: -.6px; }
.start { width: 97px; height: 29px; display: flex; align-items: center; gap: 9px; padding-left: 10px; border-radius: 0 10px 14px 0; background: linear-gradient(#5a9c58 0, #3f943f 4px, #3c9a3c 20px, #2a742a); box-shadow: inset -3px 0 4px #1f6620; }
.start em { margin-top: -4px; font: italic 300 18px/24px "Noto Sans CJK SC", sans-serif; text-shadow: 1px 1px 1px #244; }
.tasks { display: flex; gap: 2px; margin-left: 10px; }
.tasks div { width: 132px; height: 25px; display: flex; align-items: center; padding-left: 8px; border-radius: 3px; background: linear-gradient(#5a98f8 0, #3c81f3 4px, #3b7ef0 20px, #2f6ddd); box-shadow: inset -1px -1px #2458c0; white-space: pre; }
.tasks svg { margin-right: 4px; }
.tasks b { font: 12px/16px "Noto Sans CJK SC", sans-serif; letter-spacing: 0; }
.tasks .current { background: #1e50b8; box-shadow: inset 1px 1px 2px #123a86; }
.lang { margin-left: 9px; }
.tray { margin-left: auto; width: 59px; height: 30px; display: flex; align-items: center; gap: 6px; background: linear-gradient(#1290e8 0, #18b4f4 3px, #1497e8 8px, #1390e4 24px, #0d70bf); border-left: 1px solid #0b4f9c; }
.tray svg { margin-left: -10px; }
.tray time { font-size: 11px; }
```
